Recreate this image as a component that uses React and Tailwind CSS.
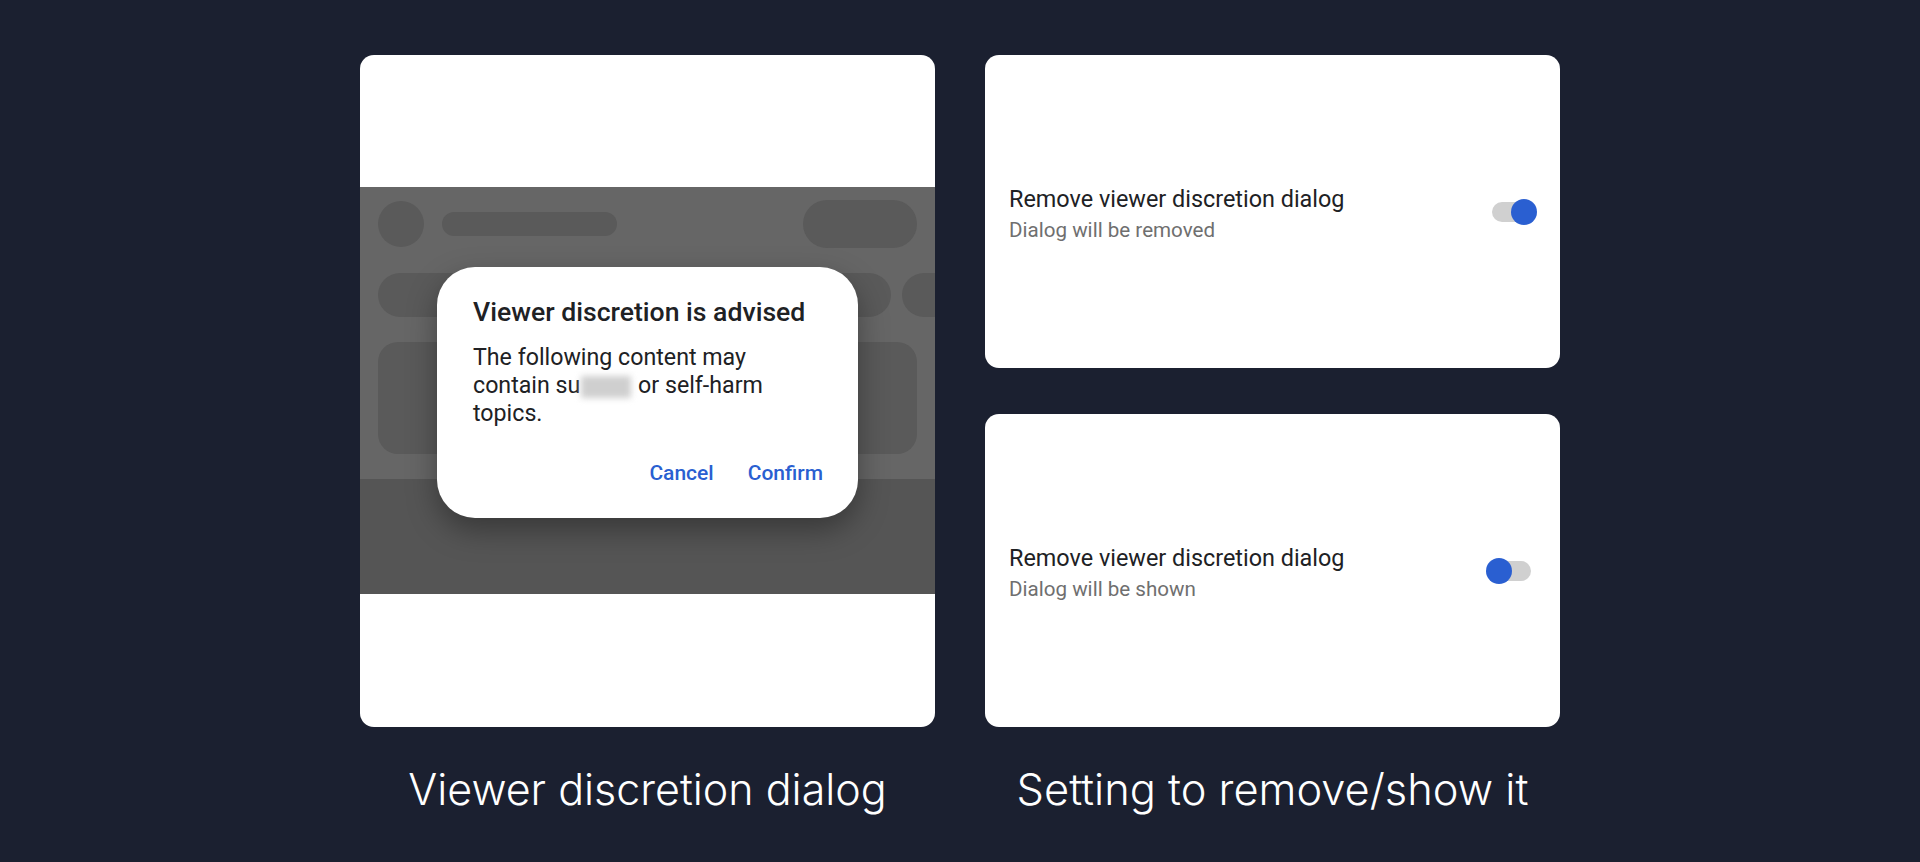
import React from 'react';

const Toggle = ({ on }) => (
  <div className="relative w-[51px] h-[28px] flex items-center">
    <div className="mx-auto w-[39px] h-[20px] rounded-full bg-[#d0d0d0]" />
    <div
      className={`absolute top-[1px] w-[26px] h-[26px] rounded-full bg-[#2a5fd1] ${on ? 'right-0' : 'left-0'}`}
    />
  </div>
);

const SettingCard = ({ on, subtitle }) => (
  <div className="h-[313px] bg-white rounded-[14px] flex items-center pl-[24px] pr-[23px]">
    <div className="flex-1 pt-[5px]" style={{ fontFamily: 'Roboto, sans-serif' }}>
      <div className="text-[23.4px] leading-[30px] text-[#202124]">Remove viewer discretion dialog</div>
      <div className="text-[20.6px] leading-[28px] text-[#6f6f6f] mt-[2px]">{subtitle}</div>
    </div>
    <Toggle on={on} />
  </div>
);

const DialogPreview = () => (
  <div className="h-[672px] bg-white rounded-[14px] overflow-hidden flex flex-col">
    <div className="h-[132px]" />
    <div className="relative h-[407px] bg-[#555555]">
      <div className="h-[292px] bg-[#666666] pt-[13px] pl-[18px] overflow-hidden">
        <div className="flex items-center">
          <div className="w-[46px] h-[46px] rounded-full bg-[#5a5a5a]" />
          <div className="ml-[18px] w-[175px] h-[24px] rounded-full bg-[#5a5a5a]" />
          <div className="ml-auto mr-[18px] w-[114px] h-[48px] rounded-full bg-[#5a5a5a]" />
        </div>
        <div className="flex gap-[11px] mt-[25px] w-[700px]">
          <div className="w-[140px] h-[44px] rounded-full bg-[#5a5a5a]" />
          <div className="w-[362px] h-[44px] rounded-full bg-[#5a5a5a]" />
          <div className="w-[100px] h-[44px] rounded-full bg-[#5a5a5a]" />
        </div>
        <div className="mt-[25px] mr-[18px] h-[112px] rounded-[20px] bg-[#5a5a5a]" />
      </div>
      <div
        className="absolute left-[77px] top-[80px] w-[421px] h-[251px] bg-white rounded-[38px] pl-[36px] pr-[35px] pt-[29px] shadow-[0_12px_30px_rgba(0,0,0,0.35)]"
        style={{ fontFamily: 'Roboto, sans-serif' }}
      >
        <div className="text-[26.6px] leading-[32px] font-medium text-[#202124]">Viewer discretion is advised</div>
        <div className="mt-[15px] text-[23.2px] leading-[28px] text-[#202124]">
          The following content may
          <br />
          contain su
          <span className="inline-block align-middle w-[50px] h-[22px] mx-[1px] bg-[#cfcfcf] blur-[3px]" />
          {' '}or self-harm
          <br />
          topics.
        </div>
        <div className="flex justify-end gap-[34px] mt-[32px] text-[21px] leading-[28px] font-medium text-[#2a5fd1]">
          <span>Cancel</span>
          <span>Confirm</span>
        </div>
      </div>
    </div>
    <div className="flex-1" />
  </div>
);

export default function App() {
  return (
    <div className="min-h-screen bg-[#1b2030] flex justify-center items-start pt-[55px]">
      <div className="grid grid-cols-[575px_575px] content-start gap-x-[50px]">
        <DialogPreview />
        <div className="flex flex-col gap-[46px]">
          <SettingCard on subtitle="Dialog will be removed" />
          <SettingCard on={false} subtitle="Dialog will be shown" />
        </div>
        <div
          className="text-center text-white text-[43px] leading-[52px] font-light mt-[36px]"
          style={{ fontFamily: 'Inter, sans-serif' }}
        >
          Viewer discretion dialog
        </div>
        <div
          className="text-center text-white text-[43.4px] leading-[52px] font-light mt-[36px]"
          style={{ fontFamily: 'Inter, sans-serif' }}
        >
          Setting to remove/show it
        </div>
      </div>
    </div>
  );
}
